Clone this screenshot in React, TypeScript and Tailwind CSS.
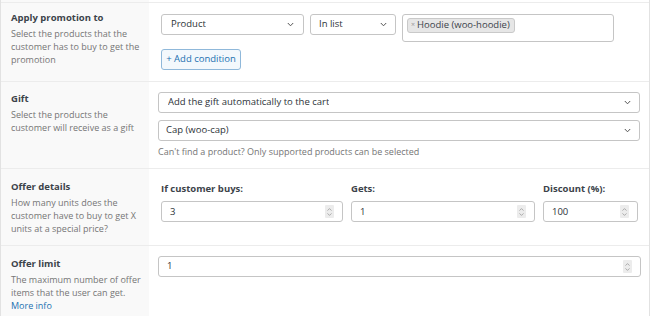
import React from "react"

const font = { fontFamily: '"Open Sans", "Noto Sans", sans-serif' }

function Chevron() {
  return (
    <svg width="7" height="5" viewBox="0 0 7 5" className="shrink-0">
      <path d="M0.8 1 L3.5 3.8 L6.2 1" fill="none" stroke="#555" strokeWidth="1" />
    </svg>
  )
}

function Spinner() {
  return (
    <span className="flex h-[13px] w-[9px] flex-col items-center justify-center gap-[2px] rounded-[1px] bg-[#ececec]">
      <svg width="5" height="3" viewBox="0 0 5 3">
        <path d="M0.5 2.6 L2.5 0.6 L4.5 2.6" fill="none" stroke="#9a9a9a" strokeWidth="0.8" />
      </svg>
      <svg width="5" height="3" viewBox="0 0 5 3">
        <path d="M0.5 0.4 L2.5 2.4 L4.5 0.4" fill="none" stroke="#9a9a9a" strokeWidth="0.8" />
      </svg>
    </span>
  )
}

function SelectBox({ label, className }: { label: string; className: string }) {
  return (
    <div className={"flex h-[21px] items-center justify-between rounded-[3px] border border-[#c5c5c5] bg-white text-[9.5px] text-[#2c3338] " + className}>
      <span className="truncate">{label}</span>
      <Chevron />
    </div>
  )
}

function NumberBox({ value, className }: { value: string; className: string }) {
  return (
    <div className={"flex h-[21px] items-center justify-between rounded-[3px] border border-[#c5c5c5] bg-white pl-[8px] pr-[8px] text-[9.5px] text-[#2c3338] " + className}>
      <span>{value}</span>
      <Spinner />
    </div>
  )
}

function Label({ title, pt, children }: { title: string; pt: string; children: React.ReactNode }) {
  return (
    <div className={"w-[148px] shrink-0 bg-[#f9f9f9] pl-[10px] pr-[2px] " + pt}>
      <div className="mb-[3px] text-[9.5px] font-bold leading-[13px] text-[#3c434a]">{title}</div>
      <div className="text-[9px] leading-[13.2px] text-[#757575]">{children}</div>
    </div>
  )
}

export default function App() {
  return (
    <div style={font} className="h-[316px] w-[650px] overflow-hidden bg-white">
      <div className="border-x border-[#e2e2e2]">
        <div className="flex h-[3px] border-b border-[#ececec]">
          <div className="w-[148px] bg-[#f9f9f9]"></div>
        </div>

        {/* Apply promotion to */}
        <div className="flex h-[79px] border-b border-[#ececec]">
          <Label title="Apply promotion to" pt="pt-[8px]">
            Select the products that the customer has to buy to get the promotion
          </Label>
          <div className="flex-1 pl-[12px] pt-[11px]">
            <div className="flex items-start">
              <SelectBox label="Product" className="w-[143px] pl-[9px] pr-[9px]" />
              <SelectBox label="In list" className="ml-[6px] w-[86px] pl-[8px] pr-[8px]" />
              <div className="ml-[6px] flex h-[28px] w-[212px] items-start rounded-[3px] border border-[#c5c5c5] bg-white pl-[4px] pt-[3px]">
                <span className="flex h-[15px] items-center rounded-[3px] border border-[#c9c9c9] bg-[#e6e6e6] pl-[3px] pr-[4px] text-[9.5px] text-[#3c434a]">
                  <span className="mr-[2px] text-[7px] text-[#999]">×</span>Hoodie (woo-hoodie)
                </span>
              </div>
            </div>
            <button className="mt-[7px] flex h-[21px] w-[80px] items-center justify-center rounded-[3px] border border-[#8fb8da] bg-[#f3f8fc] text-[9.5px] text-[#2271b1]">
              + Add condition
            </button>
          </div>
        </div>

        {/* Gift */}
        <div className="flex h-[87px] border-b border-[#ececec]">
          <Label title="Gift" pt="pt-[10px]">
            Select the products the customer will receive as a gift
          </Label>
          <div className="flex-1 pl-[9px] pr-[9px] pt-[10px]">
            <SelectBox label="Add the gift automatically to the cart" className="pl-[9px] pr-[8px]" />
            <SelectBox label="Cap (woo-cap)" className="mt-[7px] pl-[7px] pr-[8px]" />
            <div className="mt-[4px] text-[9px] leading-[13px] text-[#757575]">
              Can't find a product? Only supported products can be selected
            </div>
          </div>
        </div>

        {/* Offer details */}
        <div className="flex h-[77px] border-b border-[#ececec]">
          <Label title="Offer details" pt="pt-[11px]">
            How many units does the customer have to buy to get X units at a special price?
          </Label>
          <div className="flex-1 pl-[12px] pt-[13px]">
            <div className="grid grid-cols-[182px_184px_95px] gap-x-[8px] gap-y-[6px] text-[9.5px] font-bold leading-[13px] text-[#3c434a]">
              <div>If customer buys:</div>
              <div>Gets:</div>
              <div>Discount (%):</div>
              <NumberBox value="3" className="font-normal" />
              <NumberBox value="1" className="font-normal" />
              <NumberBox value="100" className="font-normal" />
            </div>
          </div>
        </div>

        {/* Offer limit */}
        <div className="flex h-[70px]">
          <Label title="Offer limit" pt="pt-[11px]">
            The maximum number of offer items that the user can get.
            <br />
            <span className="text-[#2271b1]">More info</span>
          </Label>
          <div className="flex-1 pl-[9px] pr-[8px] pt-[10px]">
            <NumberBox value="1" className="" />
          </div>
        </div>
      </div>
    </div>
  )
}
